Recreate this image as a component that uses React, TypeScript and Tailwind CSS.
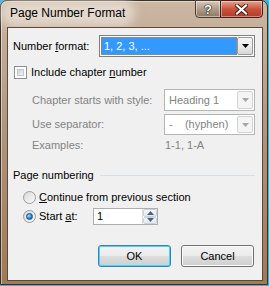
import React from 'react';

function DropArrow({ disabled }: { disabled?: boolean }) {
  return (
    <svg width="7" height="4" viewBox="0 0 7 4">
      <path d="M0 0h7L3.5 4z" fill={disabled ? '#a6a6a6' : '#000'} />
    </svg>
  );
}

function Combo({ text, width, height, disabled, selected }: { text: string; width: string; height: string; disabled?: boolean; selected?: boolean }) {
  return (
    <div className={`${width} ${height} flex border ${disabled ? 'border-[#b4b6b8] text-[#838383]' : 'border-[#7f8081]'} bg-white p-px`}>
      <div
        className={`flex-1 flex items-center pl-[3px] whitespace-pre ${
          selected ? 'bg-[#3399ff] text-white outline-1 outline-dotted outline-[#c8802f] -outline-offset-1' : ''
        }`}
      >
        {text}
      </div>
      <div
        className={`w-[16px] flex items-center justify-center rounded-[2px] border ${
          disabled
            ? 'border-[#d0d2d4] bg-[#f4f4f4]'
            : 'border-[#9a9a9a] bg-gradient-to-b from-[#f4f4f4] via-[#ebebeb] to-[#d6d6d6]'
        }`}
      >
        <DropArrow disabled={disabled} />
      </div>
    </div>
  );
}

function Radio({ checked }: { checked?: boolean }) {
  return (
    <div className="w-[13px] h-[13px] rounded-full border border-[#9a9b9c] bg-gradient-to-br from-[#d9d9d9] to-[#fbfbfb] flex items-center justify-center">
      {checked && (
        <div className="w-[7px] h-[7px] rounded-full bg-[radial-gradient(circle_at_35%_35%,#9ee2ff,#1d8be0_55%,#0a4f9a)] border border-[#174f8a]" />
      )}
    </div>
  );
}

function Button({ label, isDefault }: { label: string; isDefault?: boolean }) {
  return (
    <div
      className={`w-[73px] h-[22px] rounded-[3px] border flex items-center justify-center ${
        isDefault
          ? 'border-[#3c7fb1] shadow-[inset_0_0_0_1px_#48d5fd]'
          : 'border-[#707070] shadow-[inset_0_0_0_1px_#fbfbfb]'
      } bg-[linear-gradient(#f2f2f2_0%,#ebebeb_50%,#dddddd_50%,#cfcfcf_100%)]`}
    >
      {label}
    </div>
  );
}

export default function App() {
  return (
    <div className="w-[269px] h-[286px] bg-[#3fb4d6] font-['Liberation_Sans',Arial,sans-serif] text-[11px] text-black leading-none">
      <div className="w-[268px] h-[285px] flex flex-col rounded-t-[7px] border border-[#3b3026] bg-gradient-to-b from-[#cbb7a3] via-[#ae9279] to-[#a07a56] pl-[6px] pr-[4px] pb-[3px] shadow-[inset_1px_1px_0_rgba(255,255,255,0.45)]">
        {/* Title bar */}
        <div className="h-[26px] flex items-start">
          <div className="mt-[6px] ml-[1px] px-[2px] text-[12px] rounded-full bg-[rgba(236,228,219,0.75)] shadow-[0_0_10px_8px_rgba(236,228,219,0.7)]">
            Page Number Format
          </div>
          <div className="ml-auto -mt-px flex">
            <div className="w-[26px] h-[18px] rounded-bl-[4px] border border-[#4a3c30] bg-gradient-to-b from-[#d8c9bb] via-[#b09c88] to-[#8d775f] shadow-[inset_0_0_0_1px_rgba(255,255,255,0.45)] flex items-center justify-center">
              <span className="text-white font-bold text-[13px] [text-shadow:0_0_1px_#000,0_0_1px_#000,0_0_1px_#000]">?</span>
            </div>
            <div className="w-[43px] h-[18px] -ml-px rounded-br-[4px] border border-[#4a1d14] bg-gradient-to-b from-[#e5a393] via-[#c7533f] to-[#b63a25] shadow-[inset_0_0_0_1px_rgba(255,255,255,0.4)] flex items-center justify-center">
              <svg width="13" height="11" viewBox="0 0 13 11">
                <path d="M2 1.5l9 8M11 1.5l-9 8" stroke="#3b1a12" strokeWidth="4" strokeLinecap="square" />
                <path d="M2 1.5l9 8M11 1.5l-9 8" stroke="#fff" strokeWidth="2.2" strokeLinecap="square" />
              </svg>
            </div>
          </div>
        </div>

        {/* Client area */}
        <div className="flex-1 border border-[#5a4a3c] bg-[#f0f0f0] pl-[5px] pr-[7px] flex flex-col">
          <div className="mt-[7px] h-[22px] flex items-center">
            <div className="w-[86px]">
              Number <span className="underline">f</span>ormat:
            </div>
            <Combo text="1, 2, 3, ..." width="w-[156px]" height="h-[22px]" selected />
          </div>

          <div className="mt-[9px] h-[13px] flex items-center">
            <div className="ml-px w-[13px] h-[13px] border border-[#8e8f8f] bg-white p-[2px]">
              <div className="w-full h-full border border-[#c6c6c6] bg-gradient-to-br from-[#cbcfd5] to-[#f6f6f6]" />
            </div>
            <div className="ml-[4px]">
              Include chapter <span className="underline">n</span>umber
            </div>
          </div>

          <div className="mt-[10px] h-[22px] flex items-center text-[#838383]">
            <div className="ml-[19px] w-[132px]">Chapter starts with style:</div>
            <Combo text="Heading 1" width="w-[91px]" height="h-[22px]" disabled />
          </div>

          <div className="mt-[3px] h-[21px] flex items-center text-[#838383]">
            <div className="ml-[19px] w-[132px]">Use separator:</div>
            <Combo text="-    (hyphen)" width="w-[91px]" height="h-[21px]" disabled />
          </div>

          <div className="mt-[3px] h-[14px] flex items-center text-[#838383]">
            <div className="ml-[19px] w-[132px]">Examples:</div>
            <div className="pl-px">1-1, 1-A</div>
          </div>

          <div className="mt-[16px] h-[14px] flex items-center">
            <div>Page numbering</div>
            <div className="ml-[6px] flex-1 h-px bg-[#d5dfe5]" />
          </div>

          <div className="mt-[8px] h-[14px] flex items-center">
            <div className="ml-[10px]">
              <Radio />
            </div>
            <div className="ml-[3px]">
              <span className="underline">C</span>ontinue from previous section
            </div>
          </div>

          <div className="mt-[4px] h-[17px] flex items-center">
            <div className="ml-[10px]">
              <Radio checked />
            </div>
            <div className="ml-[3px] w-[54px]">
              Start <span className="underline">a</span>t:
            </div>
            <div className="w-[65px] h-[17px] flex border border-[#abadb3] bg-white">
              <div className="flex-1 flex items-center pl-[3px]">1</div>
              <div className="w-[15px] flex flex-col border-l border-[#dcdcdc]">
                <div className="flex-1 flex items-center justify-center rounded-[2px] border border-[#c9d2dc] bg-gradient-to-b from-[#f6f8fa] to-[#e2e8ee]">
                  <svg width="7" height="4" viewBox="0 0 7 4">
                    <path d="M0 4h7L3.5 0z" fill="#4d6185" />
                  </svg>
                </div>
                <div className="flex-1 flex items-center justify-center rounded-[2px] border border-[#c9d2dc] bg-gradient-to-b from-[#f6f8fa] to-[#e2e8ee]">
                  <svg width="7" height="4" viewBox="0 0 7 4">
                    <path d="M0 0h7L3.5 4z" fill="#4d6185" />
                  </svg>
                </div>
              </div>
            </div>
          </div>

          <div className="mt-[20px] flex justify-end gap-[10px] pr-px">
            <Button label="OK" isDefault />
            <Button label="Cancel" />
          </div>
        </div>
      </div>
    </div>
  );
}
